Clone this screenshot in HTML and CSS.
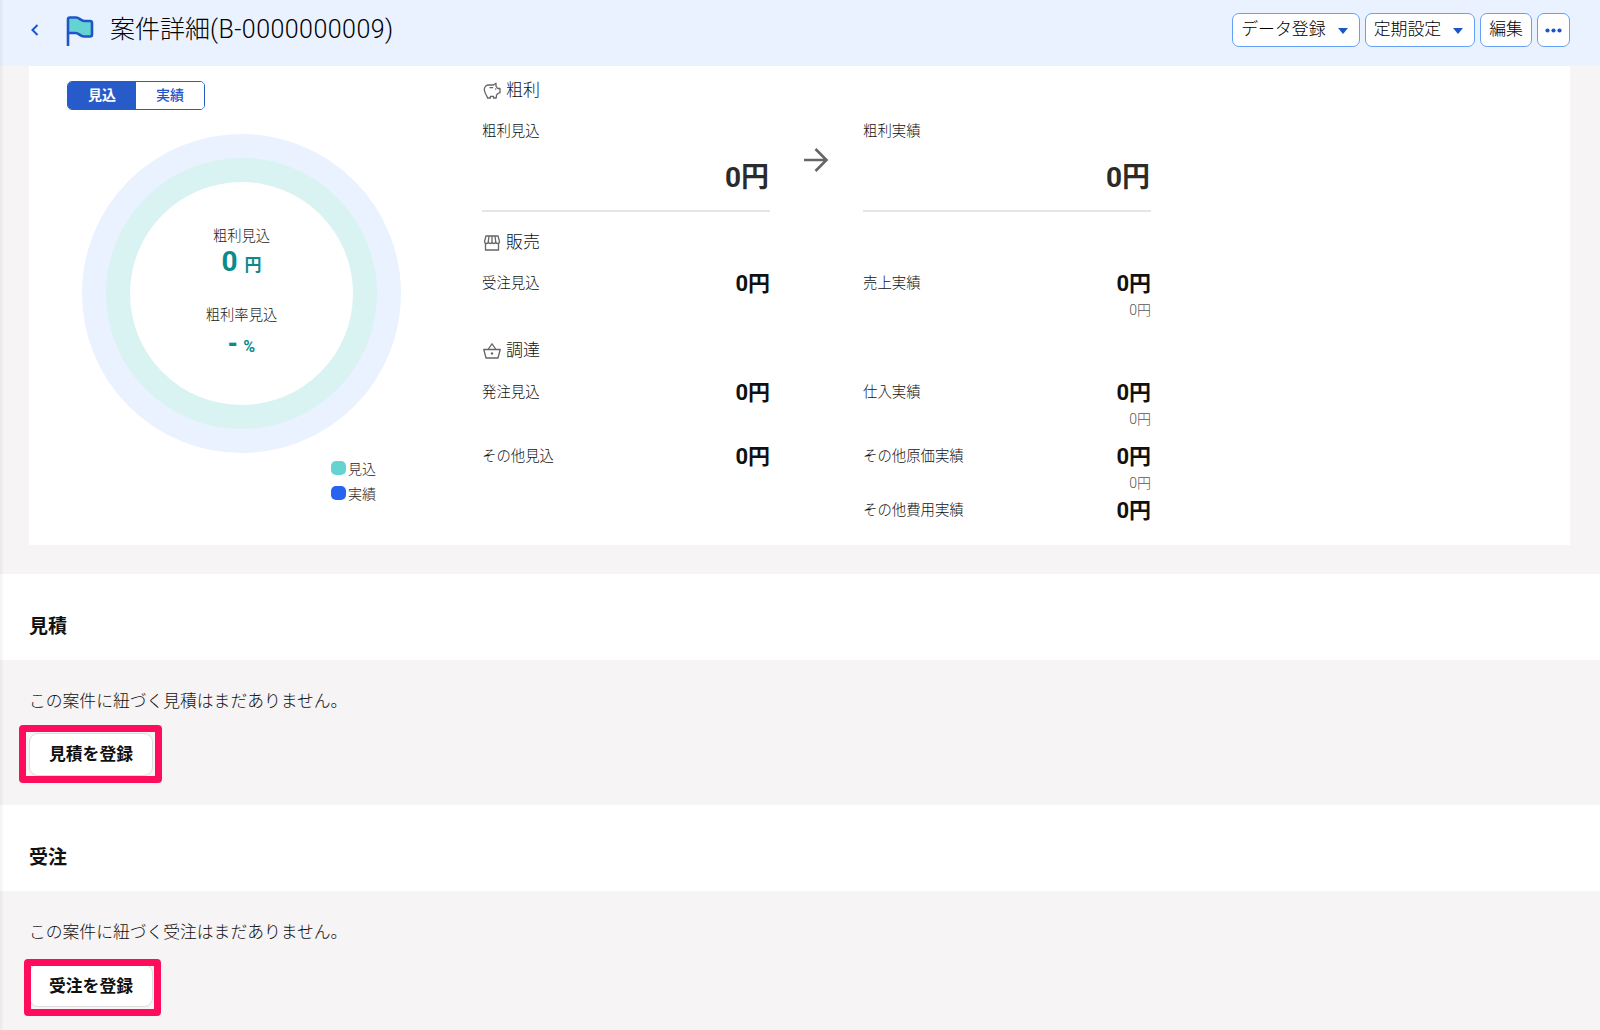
FILE: index.html
```
<!DOCTYPE html>
<html lang="ja">
<head>
    <meta charset="UTF-8">
    <meta name="viewport" content="width=device-width, initial-scale=1.0">
    <title>案件詳細</title>
    <link rel="stylesheet" href="styles.css">
</head>
<body>
    <header class="page-header">
        <a href="#" class="back" aria-label="戻る">
            <svg width="8" height="12" viewBox="0 0 8 12"><path d="M6.5 1 1.5 6l5 5" fill="none" stroke="#1a55cc" stroke-width="2"/></svg>
        </a>
        <svg class="flag" width="28" height="32" viewBox="0 0 28 32">
            <path d="M2 3.5C2 2.3 2.8 1.5 4 1.5h6c3.5 0 4.5 3.5 8.5 3.5H24c1.3 0 2 .7 2 2v11.5c0 1.3-.7 2-2 2h-6c-4 0-5-3.5-8.5-3.5H2z" fill="#66d3d3"/>
            <path d="M2 30V3.5C2 2.3 2.8 1.5 4 1.5h6c3.5 0 4.5 3.5 8.5 3.5H24c1.3 0 2 .7 2 2v11.5c0 1.3-.7 2-2 2h-6c-4 0-5-3.5-8.5-3.5H2" fill="none" stroke="#1f55c9" stroke-width="2.6"/>
        </svg>
        <h1>案件詳細<span class="code">(B-0000000009)</span></h1>
        <div class="actions">
            <button>データ登録<span class="caret"></span></button>
            <button>定期設定<span class="caret"></span></button>
            <button>編集</button>
            <button class="more" aria-label="その他">
                <svg width="17" height="5" viewBox="0 0 17 5" fill="#1a55cc"><circle cx="2.5" cy="2.5" r="2.1"/><circle cx="8.5" cy="2.5" r="2.1"/><circle cx="14.5" cy="2.5" r="2.1"/></svg>
            </button>
        </div>
    </header>

    <main>
        <div class="card">
            <div class="chart">
                <div class="toggle">
                    <button class="active">見込</button>
                    <button>実績</button>
                </div>
                <div class="donut">
                    <div class="donut-inner">
                        <span class="donut-label">粗利見込</span>
                        <span class="donut-value">0 <small class="yen">円</small></span>
                        <span class="donut-label rate">粗利率見込</span>
                        <span class="donut-value percent"><i class="dash">-</i><small>%</small></span>
                    </div>
                </div>
                <ul class="legend">
                    <li><i class="plan"></i>見込</li>
                    <li><i class="actual"></i>実績</li>
                </ul>
            </div>

            <div class="metrics">
                <h2>
                    <svg width="18" height="18" viewBox="0 0 18 18" fill="none" stroke="#666" stroke-width="1.3" stroke-linejoin="round"><path d="M6 3h4.5L13 1.3v2.9l1.6 2.3H17v4.2l-2.2.8-1.3 1.7-.3 2.8h-2.700v-1.700H7.400V16H4.600C4 13.500 1.300 11 1.300 7.500 1.300 5 3.300 3 6 3z"/><path d="M6.500 5.700h3.700M12.200 7h1"/></svg>
                    粗利
                </h2>
                <div class="row profit">
                    <div class="cell">
                        <span class="label">粗利見込</span>
                        <strong>0円</strong>
                    </div>
                    <div class="arrow">
                        <svg width="25" height="24" viewBox="0 0 25 24" fill="none" stroke="#666" stroke-width="2.6"><path d="M0 12h23M11.5 1l11 11-11 11"/></svg>
                    </div>
                    <div class="cell">
                        <span class="label">粗利実績</span>
                        <strong>0円</strong>
                    </div>
                </div>

                <h2>
                    <svg width="18" height="18" viewBox="0 0 18 18" fill="none" stroke="#666" stroke-width="1.3"><path d="M3 2h12l1.500 5.500c0 1.200-.8 2-1.900 2s-1.900-.8-1.900-2c0 1.200-.8 2-1.850 2S9 8.700 9 7.500c0 1.200-.8 2-1.850 2s-1.850-.8-1.850-2c0 1.200-.8 2-1.900 2s-1.900-.8-1.900-2zM6 2l-.7 5.500M9 2v5.500M12 2l.7 5.500M2.500 9.500V16h13V9.500"/></svg>
                    販売
                </h2>
                <div class="row sales">
                    <div class="cell">
                        <span class="label">受注見込</span>
                        <strong>0円</strong>
                    </div>
                    <div class="cell">
                        <span class="label">売上実績</span>
                        <strong>0円<small>0円</small></strong>
                    </div>
                </div>

                <h2>
                    <svg width="18" height="18" viewBox="0 0 18 18" fill="none" stroke="#666" stroke-width="1.3" stroke-linejoin="round"><path d="M.8 7.5h16.400L15 16H3zM5 7.500l4-5.700 4 5.700"/><circle cx="9" cy="11.5" r="1.2" fill="#666" stroke="none"/></svg>
                    調達
                </h2>
                <div class="row supply">
                    <div class="cell">
                        <span class="label">発注見込</span>
                        <strong>0円</strong>
                    </div>
                    <div class="cell">
                        <span class="label">仕入実績</span>
                        <strong>0円<small>0円</small></strong>
                    </div>
                </div>
                <div class="row other">
                    <div class="cell">
                        <span class="label">その他見込</span>
                        <strong>0円</strong>
                    </div>
                    <div class="cell">
                        <span class="label">その他原価実績</span>
                        <strong>0円<small>0円</small></strong>
                    </div>
                </div>
                <div class="row">
                    <div class="cell"></div>
                    <div class="cell">
                        <span class="label">その他費用実績</span>
                        <strong>0円</strong>
                    </div>
                </div>
            </div>
        </div>

        <section>
            <h3>見積</h3>
            <div class="section-body">
                <p>この案件に紐づく見積はまだありません。</p>
                <div class="register estimate"><button>見積を登録</button></div>
            </div>
        </section>

        <section>
            <h3>受注</h3>
            <div class="section-body">
                <p>この案件に紐づく受注はまだありません。</p>
                <div class="register order"><button>受注を登録</button></div>
            </div>
        </section>
    </main>
</body>
</html>
```

FILE: styles.css
```
*,
*::after {
    box-sizing: border-box;
    margin: 0;
    padding: 0;
}
body {
    height: 1030px;
    overflow: hidden;
    position: relative;
    background-color: #f6f4f5;
    color: #111;
    font-family: Roboto, "Noto Sans CJK JP", sans-serif;
    font-weight: 300;
}
/* soft shadow of the side menu */
body::after {
    content: "";
    position: absolute;
    top: 0;
    left: 0;
    width: 4px;
    height: 100%;
    background: linear-gradient(to right, rgba(0, 0, 0, 0.05), transparent);
}
button {
    font: inherit;
    color: inherit;
    background-color: #fff;
    cursor: pointer;
}

.page-header {
    display: flex;
    align-items: flex-start;
    height: 66px;
    padding: 0 30px 0 31px;
    background-color: #eaf2ff;
}
.back {
    display: flex;
    margin-top: 24px;
}
.flag {
    margin: 16px 0 0 27px;
}
.page-header h1 {
    margin-left: 16px;
    font-size: 25px;
    font-weight: 300;
    line-height: 60px;
    color: #000;
}
.code {
    letter-spacing: 0.45px;
}
.actions {
    display: flex;
    gap: 5px;
    margin: 13px 0 0 auto;
}
.actions button {
    display: flex;
    align-items: center;
    height: 34px;
    padding: 0 8px 5px;
    border: 1px solid #65a0f8;
    border-radius: 7px;
    font-size: 16.9px;
    color: #000;
}
.actions .more {
    padding: 1px 7px 0;
}
.caret {
    margin: 7px 3px 0 12px;
    border: 5px solid transparent;
    border-top: 6px solid #1a55cc;
    border-bottom: 0;
}

.card {
    display: flex;
    height: 479px;
    margin: 0 30px 29px 29px;
    padding: 14px 0 0 38px;
    background-color: #fff;
}
.chart {
    width: 415px;
}
.toggle {
    display: flex;
    width: 138px;
    height: 29px;
    margin-top: 1px;
    border: 1px solid #275bca;
    border-radius: 5px;
    overflow: hidden;
}
.toggle button {
    flex: 1;
    padding-bottom: 3px;
    border: none;
    font-size: 14px;
    font-weight: 500;
    color: #1a55cc;
}
.toggle .active {
    background-color: #275bca;
    font-weight: 700;
    color: #fff;
}
.donut {
    width: 319px;
    height: 319px;
    margin: 24px 0 0 15px;
    border: 24px solid #eaf2ff;
    border-radius: 50%;
    background-color: #d8f3f2;
}
.donut-inner {
    display: flex;
    flex-direction: column;
    align-items: center;
    width: 223px;
    height: 223px;
    margin: 24px;
    padding-top: 44px;
    border-radius: 50%;
    background-color: #fff;
}
.donut-label {
    font-size: 14.3px;
    line-height: 20px;
    color: #222;
}
.donut-label.rate {
    margin-top: 24px;
}
.donut-value {
    font-size: 28px;
    font-weight: 700;
    line-height: 31px;
    color: #0b8b8b;
}
.donut-value small {
    font-size: 16px;
}
.donut-value .yen {
    font-size: 17px;
}
.donut-value.percent {
    display: flex;
    align-items: baseline;
    gap: 6px;
    margin-top: 2px;
    line-height: 32px;
}
.dash {
    font-family: "Liberation Sans", sans-serif;
    font-style: normal;
}
.legend {
    margin: 4px 0 0 264px;
    list-style: none;
    font-size: 14px;
    line-height: 25px;
    color: #222;
}
.legend li {
    display: flex;
    align-items: center;
}
.legend i {
    width: 15px;
    height: 14px;
    margin: 0 2px 3px 0;
    border-radius: 5px;
}
.plan {
    background-color: #66d3d3;
}
.actual {
    background-color: #2563f0;
}

.metrics {
    width: 669px;
}
.metrics h2 {
    display: flex;
    gap: 5px;
    height: 22px;
    padding-left: 1px;
    font-size: 17px;
    font-weight: 300;
    line-height: 21px;
}
.metrics h2 svg {
    margin-top: 2px;
}
.row {
    display: flex;
    justify-content: space-between;
}
.cell {
    display: flex;
    justify-content: space-between;
    width: 288px;
}
.label {
    font-size: 14.4px;
    line-height: 25px;
}
.cell strong {
    font-size: 22px;
    font-weight: 700;
    line-height: 26px;
    text-align: right;
}
.cell small {
    display: block;
    font-size: 14px;
    font-weight: 300;
    line-height: 27px;
    color: #555;
}
.profit {
    height: 110px;
    margin-bottom: 20px;
}
.profit .cell {
    flex-direction: column;
    padding: 18px 0 14px;
    border-bottom: 2px solid #e5e5e5;
}
.profit .label {
    line-height: 24px;
}
.profit strong {
    padding-right: 1px;
    font-size: 28px;
    line-height: 37px;
    color: #2b2b2b;
}
.arrow {
    padding-top: 46px;
    margin-right: 1px;
}
.sales {
    height: 86px;
    padding-top: 17px;
}
.supply {
    height: 82px;
    padding-top: 18px;
}
.other {
    height: 54px;
}

section h3 {
    height: 86px;
    padding-left: 29px;
    background-color: #fff;
    font-size: 19px;
    font-weight: 700;
    line-height: 105px;
}
.section-body {
    height: 145px;
    padding: 29px 0 0 29px;
}
.section-body p {
    font-size: 16.8px;
    line-height: 24px;
}
.register {
    position: relative;
    width: 124px;
    margin-top: 20px;
}
.register button {
    width: 124px;
    height: 43px;
    padding-bottom: 3px;
    border: 1px solid #ddd;
    border-radius: 9px;
    font-size: 16.8px;
    font-weight: 700;
}
.order button {
    padding-bottom: 1px;
}
/* marker frame around the button */
.register::after {
    content: "";
    position: absolute;
    top: -8px;
    left: -10px;
    width: 143px;
    height: 58px;
    border: 7px solid #ff0d5d;
    border-radius: 4px;
}
.order::after {
    top: -5px;
    left: -5px;
    width: 137px;
    height: 57px;
}
```
